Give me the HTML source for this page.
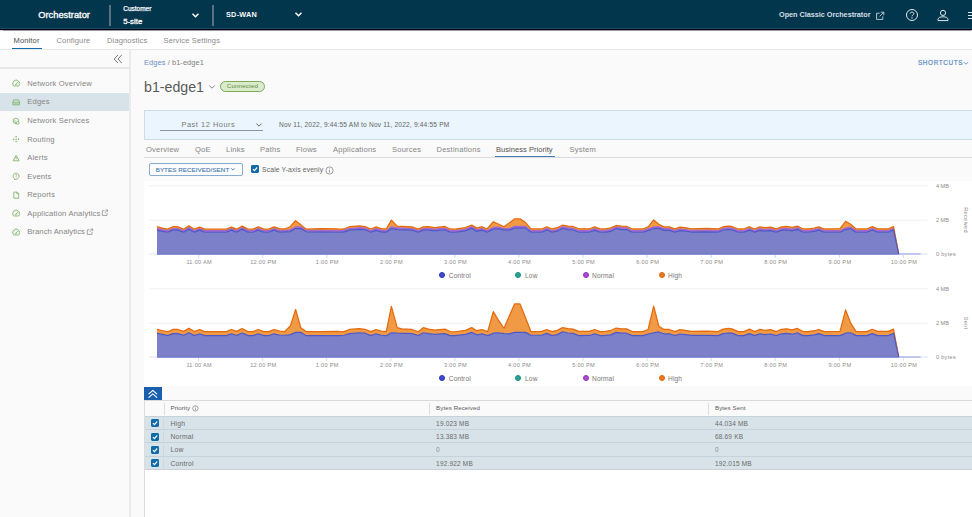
<!DOCTYPE html>
<html>
<head>
<meta charset="utf-8">
<title>Orchestrator</title>
<style>
*{box-sizing:border-box;margin:0;padding:0}
html,body{width:972px;height:517px;overflow:hidden;background:#fafafa;font-family:"Liberation Sans",sans-serif;color:#565656}
.abs{position:absolute}
.t{position:absolute;white-space:nowrap;line-height:1}
#hdr{position:absolute;left:0;top:0;width:972px;height:30px;background:#02364d;border-bottom:1.15px solid #05071f;box-shadow:0 .5px .9px rgba(0,0,0,.4),inset 0 -1.1px 0 #1a465a;z-index:5}
#hdr .t{color:#fafafa}
.vsep{position:absolute;top:5px;width:1.2px;height:20.6px;background:#587080}
#subnav{z-index:3;position:absolute;left:0;top:30px;width:972px;height:19.8px;background:#fff;border-bottom:1.4px solid #e8e8e8}
#side{position:absolute;left:0;top:49px;width:131px;height:468px;background:transparent;border-right:2px solid #ebebeb}
#side .it{position:absolute;left:27.2px;font-size:7.6px;color:#858585;letter-spacing:.2px;white-space:nowrap;line-height:1}
#side svg{position:absolute}

#main .t{color:#666}
#timebar{position:absolute;left:144px;top:110px;width:830px;height:30px;background:#eaf5fd;border:1px solid #cddde8}
.tab{position:absolute;top:145.5px;font-size:7.6px;color:#858585;letter-spacing:.2px;white-space:nowrap;line-height:1}
.chartbg{position:absolute;left:144px;width:828px;background:#fff}
.xl{position:absolute;font-size:5.6px;color:#8c8c8c;letter-spacing:.3px;white-space:nowrap;line-height:1;transform:translateX(-50%)}
.yl{position:absolute;left:935.9px;font-size:5.6px;letter-spacing:.22px;color:#8c8c8c;white-space:nowrap;line-height:1}
.lg{position:absolute;font-size:6.6px;color:#777;white-space:nowrap;line-height:1;letter-spacing:.1px}
.dot{position:absolute;width:6px;height:6px;border-radius:50%}
.row{position:absolute;left:145px;width:827px;height:13.3px;background:#d8e3e9;border-top:1px solid #c9d4db}
.cell{position:absolute;font-size:6.5px;color:#666;white-space:nowrap;line-height:1;letter-spacing:.18px}
.cb{position:absolute;width:8.2px;height:8px;background:#0f6ba8;border-radius:1.4px}
</style>
</head>
<body>
<!-- HEADER -->
<div id="hdr">
  <div class="t" style="left:38.3px;top:11px;font-size:9.3px;-webkit-text-stroke:.35px #fafafa">Orchestrator</div>
  <div class="vsep" style="left:109.4px"></div>
  <div class="t" style="left:123.2px;top:6.3px;font-size:6.5px;-webkit-text-stroke:.25px #fafafa">Customer</div>
  <div class="t" style="left:123.2px;top:17.5px;font-size:7.8px;-webkit-text-stroke:.3px #fafafa">5-site</div>
  <svg class="abs" style="left:191px;top:11.5px" width="9" height="7" viewBox="0 0 9 7"><path d="M1.5 1.7 L4.5 4.7 L7.5 1.7" fill="none" stroke="#fff" stroke-width="1.5"/></svg>
  <div class="vsep" style="left:212.4px"></div>
  <div class="t" style="left:226px;top:11.4px;font-size:7.3px;font-weight:bold;letter-spacing:.25px">SD-WAN</div>
  <svg class="abs" style="left:294px;top:11px" width="9" height="7" viewBox="0 0 9 7"><path d="M1.5 1.7 L4.5 4.7 L7.5 1.7" fill="none" stroke="#fff" stroke-width="1.5"/></svg>
  <div class="t" style="left:779px;top:11.1px;font-size:7.3px;font-weight:bold;letter-spacing:-.04px;color:#d4dde3">Open Classic Orchestrator</div>
  <svg class="abs" style="left:875px;top:10.5px" width="10" height="10" viewBox="0 0 10 10"><path d="M4.6 2.2 H1.6 V8.4 H7.8 V5.4" fill="none" stroke="#c9d4db" stroke-width=".9"/><path d="M5.8 1.2 H8.8 V4.2 M8.7 1.3 L4.6 5.4" fill="none" stroke="#c9d4db" stroke-width=".9"/></svg>
  <svg class="abs" style="left:905px;top:8.2px" width="14" height="14" viewBox="0 0 14 14"><circle cx="7" cy="7" r="5.5" fill="none" stroke="#dfe6ea" stroke-width="1"/><path d="M5.2 5.6 C5.2 3.6 8.8 3.6 8.8 5.6 C8.8 6.9 7 6.9 7 8.4" fill="none" stroke="#dfe6ea" stroke-width="1"/><circle cx="7" cy="10" r=".65" fill="#dfe6ea"/></svg>
  <svg class="abs" style="left:936px;top:8px" width="14" height="14" viewBox="0 0 14 14"><circle cx="7" cy="4.9" r="2.6" fill="none" stroke="#dfe6ea" stroke-width="1"/><path d="M2 12.6 V11.6 C2 9.6 4.2 8.8 7 8.8 C9.8 8.8 12 9.6 12 11.6 V12.6 Z" fill="none" stroke="#dfe6ea" stroke-width="1" stroke-linejoin="round"/></svg>
  <div class="abs" style="left:967.5px;top:12.3px;width:5px;height:1.1px;background:#dfe6ea"></div>
  <div class="abs" style="left:967.5px;top:15px;width:5px;height:1.1px;background:#dfe6ea"></div>
  <div class="abs" style="left:967.5px;top:17.7px;width:5px;height:1.1px;background:#dfe6ea"></div>
</div>
<!-- SUBNAV -->
<div id="subnav">
  <div class="t" style="left:13.5px;top:6.5px;font-size:7.5px;color:#4d4d4d;letter-spacing:.15px">Monitor</div>
  <div class="abs" style="left:12px;top:17.5px;width:29.7px;height:1.5px;background:#0f6ca8"></div>
  <div class="t" style="left:56.5px;top:6.5px;font-size:7.5px;color:#8a8a8a;letter-spacing:.15px">Configure</div>
  <div class="t" style="left:107px;top:6.5px;font-size:7.5px;color:#8a8a8a;letter-spacing:.15px">Diagnostics</div>
  <div class="t" style="left:163.5px;top:6.5px;font-size:7.5px;color:#8a8a8a;letter-spacing:.15px">Service Settings</div>
</div>
<!-- SIDEBAR -->
<div id="side">
<div class="abs" style="left:0;top:18.1px;width:129px;height:1.6px;background:#e7e7e7"></div>
<svg style="left:113.3px;top:4.6px" width="10" height="10" viewBox="0 0 10 10"><path d="M4.9 1 L1.2 5 L4.9 9 M8.7 1 L5 5 L8.7 9" fill="none" stroke="#6e6e6e" stroke-width=".95"/></svg>
<div class="abs" style="left:0;top:44px;width:129px;height:17.8px;background:#d8e3e9"></div>
<svg style="left:12px;top:30.45px" width="8.3" height="8.3" viewBox="0 0 10 10"><path d="M1.9 8.4 A4.2 4.2 0 1 1 8.1 8.4 Z" fill="none" stroke="#74ae5a" stroke-width=".95" stroke-linejoin="round"/><path d="M4.7 6.5 L6.9 4" stroke="#74ae5a" stroke-width="1" stroke-linecap="round"/><circle cx="4.8" cy="6.4" r=".8" fill="#74ae5a"/><path d="M5 2.2 V3 M2.4 3.4 L2.9 3.9 M1.7 5.6 H2.4 M8.3 5.6 H7.6" stroke="#74ae5a" stroke-width=".5"/></svg>
<div class="it" style="top:30.90px">Network Overview</div>
<svg style="left:12px;top:49.00px" width="8.3" height="8.3" viewBox="0 0 10 10"><path d="M1 5.1 L2.1 2.3 H7.9 L9 5.1 V8.2 H1 Z" fill="none" stroke="#74ae5a" stroke-width=".95" stroke-linejoin="round"/><path d="M1 5.1 H9" stroke="#74ae5a" stroke-width=".85"/><path d="M2.2 6.8 H7.8" stroke="#74ae5a" stroke-width=".85" stroke-dasharray="1 .5"/></svg>
<div class="it" style="top:49.45px">Edges</div>
<svg style="left:12px;top:67.55px" width="8.3" height="8.3" viewBox="0 0 10 10"><circle cx="4.7" cy="4.7" r="3.3" fill="none" stroke="#74ae5a" stroke-width=".95"/><path d="M2.6 3.2 Q4 4 3.6 5.4 Q4.6 6 4.4 7.6" fill="none" stroke="#74ae5a" stroke-width=".85"/><circle cx="6.9" cy="7" r="1.7" fill="#fafafa" stroke="#74ae5a" stroke-width=".95"/></svg>
<div class="it" style="top:68.00px">Network Services</div>
<svg style="left:12px;top:86.10px" width="8.3" height="8.3" viewBox="0 0 10 10"><circle cx="5" cy="5" r=".9" fill="#74ae5a"/><path d="M5 .9 L6.4 2.6 H3.6 Z M5 9.1 L6.4 7.4 H3.6 Z M.9 5 L2.6 3.6 V6.4 Z M9.1 5 L7.4 3.6 V6.4 Z" fill="#74ae5a"/></svg>
<div class="it" style="top:86.55px">Routing</div>
<svg style="left:12px;top:104.65px" width="8.3" height="8.3" viewBox="0 0 10 10"><path d="M5 1.6 L8.6 8.2 H1.4 Z" fill="none" stroke="#74ae5a" stroke-width=".95" stroke-linejoin="round"/><path d="M5 3.9 V6" stroke="#74ae5a" stroke-width=".95"/><circle cx="5" cy="7" r=".45" fill="#74ae5a"/></svg>
<div class="it" style="top:105.10px">Alerts</div>
<svg style="left:12px;top:123.20px" width="8.3" height="8.3" viewBox="0 0 10 10"><path d="M3.2 8.2 A3.6 3.6 0 1 1 5.4 8.6 L3 9.2 Z" fill="none" stroke="#74ae5a" stroke-width=".95" stroke-linejoin="round"/><path d="M5 2.9 V5.5" stroke="#74ae5a" stroke-width=".95"/><circle cx="5" cy="6.7" r=".45" fill="#74ae5a"/></svg>
<div class="it" style="top:123.65px">Events</div>
<svg style="left:12px;top:141.75px" width="8.3" height="8.3" viewBox="0 0 10 10"><path d="M2.2 1.3 H6 L8 3.3 V8.7 H2.2 Z" fill="none" stroke="#74ae5a" stroke-width=".95" stroke-linejoin="round"/><path d="M5.8 1.5 V3.5 H7.8" fill="none" stroke="#74ae5a" stroke-width=".85"/></svg>
<div class="it" style="top:142.20px">Reports</div>
<svg style="left:12px;top:160.30px" width="8.3" height="8.3" viewBox="0 0 10 10"><path d="M1.9 8.4 A4.2 4.2 0 1 1 8.1 8.4 Z" fill="none" stroke="#74ae5a" stroke-width=".95" stroke-linejoin="round"/><path d="M4.7 6.5 L6.9 4" stroke="#74ae5a" stroke-width="1" stroke-linecap="round"/><circle cx="4.8" cy="6.4" r=".8" fill="#74ae5a"/><path d="M5 2.2 V3 M2.4 3.4 L2.9 3.9 M1.7 5.6 H2.4 M8.3 5.6 H7.6" stroke="#74ae5a" stroke-width=".5"/></svg>
<div class="it" style="top:160.75px">Application Analytics</div>
<svg style="left:100.7px;top:160.15px" width="7.5" height="7.5" viewBox="0 0 7 7"><path d="M3.4 1.6 H1.2 V6 H5.6 V3.8" fill="none" stroke="#808080" stroke-width=".65"/><path d="M4.2 .9 H6.3 V3 M6.2 1 L3.4 3.8" fill="none" stroke="#808080" stroke-width=".65"/></svg>
<svg style="left:12px;top:178.85px" width="8.3" height="8.3" viewBox="0 0 10 10"><path d="M1.9 8.4 A4.2 4.2 0 1 1 8.1 8.4 Z" fill="none" stroke="#74ae5a" stroke-width=".95" stroke-linejoin="round"/><path d="M4.7 6.5 L6.9 4" stroke="#74ae5a" stroke-width="1" stroke-linecap="round"/><circle cx="4.8" cy="6.4" r=".8" fill="#74ae5a"/><path d="M5 2.2 V3 M2.4 3.4 L2.9 3.9 M1.7 5.6 H2.4 M8.3 5.6 H7.6" stroke="#74ae5a" stroke-width=".5"/></svg>
<div class="it" style="top:179.30px;letter-spacing:.1px">Branch Analytics</div>
<svg style="left:86.4px;top:178.70px" width="7.5" height="7.5" viewBox="0 0 7 7"><path d="M3.4 1.6 H1.2 V6 H5.6 V3.8" fill="none" stroke="#808080" stroke-width=".65"/><path d="M4.2 .9 H6.3 V3 M6.2 1 L3.4 3.8" fill="none" stroke="#808080" stroke-width=".65"/></svg>
</div>
<!-- MAIN -->
<div id="main">
  <div class="t" style="left:144px;top:58.5px;font-size:7.4px;letter-spacing:.1px"><span style="color:#6a8fc4">Edges</span> <span style="color:#808080">/ b1-edge1</span></div>
  <div class="t" style="left:144px;top:79.6px;font-size:14.2px;color:#5a5a5a;letter-spacing:0">b1-edge1</div>
  <svg class="abs" style="left:207.9px;top:83.9px" width="8" height="6" viewBox="0 0 8 6"><path d="M1.3 1.5 L4 4.2 L6.7 1.5" fill="none" stroke="#7a7a7a" stroke-width=".9"/></svg>
  <div class="abs" style="left:220px;top:81.2px;width:45px;height:11px;border:1px solid #7dab5c;background:#d9ebcb;border-radius:5.5px"></div>
  <div class="t" style="left:226.8px;top:83.4px;font-size:6.2px;color:#5e8c42;letter-spacing:.15px">Connected</div>
  <div class="t" style="left:918px;top:59.5px;font-size:6.4px;color:#5b8cbd;letter-spacing:.6px;-webkit-text-stroke:.2px #5b8cbd">SHORTCUTS</div>
  <svg class="abs" style="left:963px;top:60.5px" width="6" height="5" viewBox="0 0 6 5"><path d="M1 1.2 L3 3.2 L5 1.2" fill="none" stroke="#5b8cb8" stroke-width=".9"/></svg>

  <div id="timebar"></div>
  <div class="t" style="left:181.5px;top:120.5px;font-size:7.4px;color:#787878;letter-spacing:.54px">Past 12 Hours</div>
  <div class="abs" style="left:160px;top:130px;width:103px;height:1px;background:#8c959b"></div>
  <svg class="abs" style="left:255px;top:122.4px" width="8" height="6" viewBox="0 0 8 6"><path d="M1.4 1.6 L4 4.2 L6.6 1.6" fill="none" stroke="#666" stroke-width="1"/></svg>
  <div class="t" style="left:279px;top:122.2px;font-size:6.6px;color:#666;letter-spacing:.18px">Nov 11, 2022, 9:44:55 AM to Nov 11, 2022, 9:44:55 PM</div>

  <div class="abs" style="left:144px;top:157.3px;width:828px;height:1px;background:#dcdcdc"></div>
  <div class="tab" style="left:146px">Overview</div>
  <div class="tab" style="left:195px">QoE</div>
  <div class="tab" style="left:226px">Links</div>
  <div class="tab" style="left:260px">Paths</div>
  <div class="tab" style="left:296px">Flows</div>
  <div class="tab" style="left:333px">Applications</div>
  <div class="tab" style="left:392px">Sources</div>
  <div class="tab" style="left:436.5px">Destinations</div>
  <div class="tab" style="left:496px;color:#555;letter-spacing:0">Business Priority</div>
  <div class="abs" style="left:494.5px;top:155.6px;width:60px;height:1.6px;background:#3d7fb8"></div>
  <div class="tab" style="left:569.5px">System</div>

  <div class="abs" style="left:149px;top:163px;width:93.5px;height:13px;border:1px solid #89abd0;border-radius:2px;background:#fdfdfd"></div>
  <div class="t" style="left:155.7px;top:166.6px;font-size:6.2px;color:#4a7fb5;letter-spacing:.09px;-webkit-text-stroke:.15px #4a7fb5">BYTES RECEIVED/SENT</div>
  <svg class="abs" style="left:230.3px;top:167.3px" width="6" height="5" viewBox="0 0 6 5"><path d="M1.2 1.3 L3 3.1 L4.8 1.3" fill="none" stroke="#4a7fb5" stroke-width=".9"/></svg>
  <div class="cb" style="left:250.6px;top:165.4px"></div>
  <svg class="abs" style="left:250.6px;top:165.4px" width="8" height="8" viewBox="0 0 8 8"><path d="M1.9 4.2 L3.4 5.6 L6.2 2.5" fill="none" stroke="#fff" stroke-width="1.15"/></svg>
  <div class="t" style="left:262px;top:167.1px;font-size:6.8px;color:#666;letter-spacing:.14px">Scale Y-axis evenly</div>
  <svg class="abs" style="left:324.5px;top:165.6px" width="9" height="9" viewBox="0 0 9 9"><circle cx="4.5" cy="4.5" r="3.6" fill="none" stroke="#777" stroke-width=".7"/><rect x="4.15" y="3.9" width=".7" height="2.7" fill="#777"/><rect x="4.15" y="2.4" width=".7" height=".8" fill="#777"/></svg>

    <div class="chartbg" style="top:181px;height:205.4px"></div>
  <svg class="abs" style="left:0;top:0" width="972" height="517" viewBox="0 0 972 517">
<rect x="149" y="185.21" width="778.7" height="1.1" fill="#f2f2f2"/>
<rect x="149" y="219.78" width="778.7" height="1.1" fill="#f2f2f2"/>
<rect x="149" y="253.51" width="778.7" height="1" fill="#dde2f1"/>
<rect x="198.1" y="254.51" width="1" height="3.6" fill="#d5daee"/>
<rect x="262.2" y="254.51" width="1" height="3.6" fill="#d5daee"/>
<rect x="326.2" y="254.51" width="1" height="3.6" fill="#d5daee"/>
<rect x="390.3" y="254.51" width="1" height="3.6" fill="#d5daee"/>
<rect x="454.4" y="254.51" width="1" height="3.6" fill="#d5daee"/>
<rect x="518.4" y="254.51" width="1" height="3.6" fill="#d5daee"/>
<rect x="582.5" y="254.51" width="1" height="3.6" fill="#d5daee"/>
<rect x="646.6" y="254.51" width="1" height="3.6" fill="#d5daee"/>
<rect x="710.7" y="254.51" width="1" height="3.6" fill="#d5daee"/>
<rect x="774.7" y="254.51" width="1" height="3.6" fill="#d5daee"/>
<rect x="838.8" y="254.51" width="1" height="3.6" fill="#d5daee"/>
<rect x="902.9" y="254.51" width="1" height="3.6" fill="#d5daee"/>
<path d="M157.0 226.70 L162.5 228.14 L167.7 229.17 L172.8 226.70 L178.0 226.70 L183.7 229.17 L188.9 225.67 L194.4 229.17 L199.6 227.11 L204.7 229.17 L226.3 229.17 L231.4 227.11 L236.6 229.17 L242.1 226.08 L247.9 229.17 L253.1 229.17 L258.2 226.90 L263.8 229.17 L268.9 229.17 L274.0 226.90 L279.8 228.96 L284.9 228.96 L290.1 226.70 L295.6 220.73 L300.8 224.64 L306.1 229.17 L321.0 228.55 L337.4 228.96 L340.0 229.17 L344.1 228.96 L349.3 226.70 L359.5 225.87 L365.1 226.70 L370.9 228.96 L376.0 226.90 L381.2 228.55 L386.3 228.96 L391.4 220.11 L397.2 226.08 L412.0 226.90 L418.2 229.17 L423.3 226.90 L428.5 226.70 L434.7 227.52 L444.9 226.49 L450.1 228.96 L455.2 229.17 L465.5 227.52 L471.7 225.05 L476.8 228.14 L482.0 226.70 L487.1 228.96 L493.3 221.76 L498.4 224.02 L504.0 226.70 L509.3 222.99 L514.5 218.88 L520.0 218.88 L525.6 222.58 L530.9 228.96 L535.5 228.96 L541.8 228.96 L546.7 226.70 L552.0 228.96 L557.2 227.73 L562.7 225.05 L567.9 226.08 L573.0 226.49 L578.8 228.75 L589.5 228.75 L594.6 226.90 L600.2 228.96 L605.5 228.75 L610.5 227.93 L616.2 225.46 L621.4 226.08 L626.5 226.28 L632.3 228.96 L643.0 228.96 L648.1 226.90 L653.7 219.91 L658.8 224.23 L664.0 226.90 L669.3 226.90 L674.9 228.96 L680.0 227.11 L685.2 227.73 L691.3 228.75 L706.8 228.34 L718.1 228.96 L723.2 226.70 L728.4 226.08 L731.9 226.49 L738.2 228.96 L743.9 228.96 L749.5 226.70 L754.6 228.96 L759.8 226.90 L764.9 227.73 L770.7 227.11 L776.2 228.96 L781.4 226.90 L786.5 226.49 L792.1 227.31 L797.4 226.08 L803.0 228.96 L808.1 228.96 L814.3 228.14 L818.8 226.90 L824.2 228.96 L840.0 228.75 L845.6 221.35 L850.7 224.23 L856.1 228.96 L866.8 228.96 L872.3 226.70 L877.7 228.75 L888.4 228.75 L893.5 226.49 L898.7 253.86 L898.7 254.01 L893.5 229.77 L888.4 232.24 L877.7 232.24 L872.3 229.98 L866.8 232.24 L856.1 232.24 L850.7 228.74 L845.6 229.57 L840.0 232.24 L824.2 232.24 L818.8 230.18 L814.3 231.42 L808.1 232.24 L803.0 232.24 L797.4 229.36 L792.1 230.80 L786.5 229.98 L781.4 230.39 L776.2 232.24 L770.7 230.59 L764.9 231.21 L759.8 230.39 L754.6 232.24 L749.5 230.18 L743.9 232.24 L738.2 232.24 L731.9 229.77 L728.4 229.57 L723.2 229.98 L718.1 232.24 L706.8 231.83 L691.3 232.03 L685.2 231.21 L680.0 230.59 L674.9 232.24 L669.3 230.39 L664.0 230.39 L658.8 228.33 L653.7 228.54 L648.1 230.59 L643.0 232.24 L632.3 232.24 L626.5 229.57 L621.4 229.57 L616.2 228.54 L610.5 231.42 L605.5 232.03 L600.2 232.24 L594.6 230.39 L589.5 232.03 L578.8 232.24 L573.0 229.98 L567.9 229.57 L562.7 228.33 L557.2 231.21 L552.0 232.24 L546.7 229.98 L541.8 232.24 L535.5 232.24 L530.9 232.24 L525.6 228.13 L514.5 228.13 L509.3 230.18 L504.0 230.18 L498.4 228.74 L493.3 229.15 L487.1 232.24 L482.0 230.18 L476.8 231.42 L471.7 228.33 L465.5 230.80 L455.2 232.24 L450.1 232.24 L444.9 229.77 L434.7 230.80 L428.5 230.18 L423.3 230.18 L418.2 232.24 L412.0 230.18 L397.2 229.57 L391.4 228.54 L386.3 232.24 L381.2 231.83 L376.0 230.39 L370.9 232.24 L365.1 229.77 L359.5 229.36 L349.3 230.18 L344.1 231.83 L340.0 232.24 L337.4 232.24 L306.1 231.83 L300.8 228.54 L295.6 228.54 L290.1 231.62 L279.8 232.24 L274.0 230.18 L268.9 232.24 L263.8 232.24 L258.2 230.18 L253.1 232.24 L247.9 232.24 L242.1 229.15 L236.6 232.24 L231.4 230.18 L226.3 232.24 L204.7 232.24 L199.6 230.18 L194.4 232.24 L188.9 229.15 L183.7 232.24 L178.0 230.18 L172.8 230.18 L167.7 232.24 L162.5 231.42 L157.0 230.18 Z" fill="#f09a45"/>
<path d="M157.0 227.88 L162.5 229.12 L167.7 229.94 L172.8 227.88 L178.0 227.88 L183.7 229.94 L188.9 226.85 L194.4 229.94 L199.6 227.88 L204.7 229.94 L226.3 229.94 L231.4 227.88 L236.6 229.94 L242.1 226.85 L247.9 229.94 L253.1 229.94 L258.2 227.88 L263.8 229.94 L268.9 229.94 L274.0 227.88 L279.8 229.94 L290.1 229.32 L295.6 226.24 L300.8 226.24 L306.1 229.53 L337.4 229.94 L340.0 229.94 L344.1 229.53 L349.3 227.88 L359.5 227.06 L365.1 227.47 L370.9 229.94 L376.0 228.09 L381.2 229.53 L386.3 229.94 L391.4 226.24 L397.2 227.27 L412.0 227.88 L418.2 229.94 L423.3 227.88 L428.5 227.88 L434.7 228.50 L444.9 227.47 L450.1 229.94 L455.2 229.94 L465.5 228.50 L471.7 226.03 L476.8 229.12 L482.0 227.88 L487.1 229.94 L493.3 226.85 L498.4 226.44 L504.0 227.88 L509.3 227.88 L514.5 225.83 L525.6 225.83 L530.9 229.94 L535.5 229.94 L541.8 229.94 L546.7 227.68 L552.0 229.94 L557.2 228.91 L562.7 226.03 L567.9 227.27 L573.0 227.68 L578.8 229.94 L589.5 229.73 L594.6 228.09 L600.2 229.94 L605.5 229.73 L610.5 229.12 L616.2 226.24 L621.4 227.27 L626.5 227.27 L632.3 229.94 L643.0 229.94 L648.1 228.29 L653.7 226.24 L658.8 226.03 L664.0 228.09 L669.3 228.09 L674.9 229.94 L680.0 228.29 L685.2 228.91 L691.3 229.73 L706.8 229.53 L718.1 229.94 L723.2 227.68 L728.4 227.27 L731.9 227.47 L738.2 229.94 L743.9 229.94 L749.5 227.88 L754.6 229.94 L759.8 228.09 L764.9 228.91 L770.7 228.29 L776.2 229.94 L781.4 228.09 L786.5 227.68 L792.1 228.50 L797.4 227.06 L803.0 229.94 L808.1 229.94 L814.3 229.12 L818.8 227.88 L824.2 229.94 L840.0 229.94 L845.6 227.27 L850.7 226.44 L856.1 229.94 L866.8 229.94 L872.3 227.68 L877.7 229.94 L888.4 229.94 L893.5 227.47 L898.7 254.01 L898.7 254.01 L893.5 229.77 L888.4 232.24 L877.7 232.24 L872.3 229.98 L866.8 232.24 L856.1 232.24 L850.7 228.74 L845.6 229.57 L840.0 232.24 L824.2 232.24 L818.8 230.18 L814.3 231.42 L808.1 232.24 L803.0 232.24 L797.4 229.36 L792.1 230.80 L786.5 229.98 L781.4 230.39 L776.2 232.24 L770.7 230.59 L764.9 231.21 L759.8 230.39 L754.6 232.24 L749.5 230.18 L743.9 232.24 L738.2 232.24 L731.9 229.77 L728.4 229.57 L723.2 229.98 L718.1 232.24 L706.8 231.83 L691.3 232.03 L685.2 231.21 L680.0 230.59 L674.9 232.24 L669.3 230.39 L664.0 230.39 L658.8 228.33 L653.7 228.54 L648.1 230.59 L643.0 232.24 L632.3 232.24 L626.5 229.57 L621.4 229.57 L616.2 228.54 L610.5 231.42 L605.5 232.03 L600.2 232.24 L594.6 230.39 L589.5 232.03 L578.8 232.24 L573.0 229.98 L567.9 229.57 L562.7 228.33 L557.2 231.21 L552.0 232.24 L546.7 229.98 L541.8 232.24 L535.5 232.24 L530.9 232.24 L525.6 228.13 L514.5 228.13 L509.3 230.18 L504.0 230.18 L498.4 228.74 L493.3 229.15 L487.1 232.24 L482.0 230.18 L476.8 231.42 L471.7 228.33 L465.5 230.80 L455.2 232.24 L450.1 232.24 L444.9 229.77 L434.7 230.80 L428.5 230.18 L423.3 230.18 L418.2 232.24 L412.0 230.18 L397.2 229.57 L391.4 228.54 L386.3 232.24 L381.2 231.83 L376.0 230.39 L370.9 232.24 L365.1 229.77 L359.5 229.36 L349.3 230.18 L344.1 231.83 L340.0 232.24 L337.4 232.24 L306.1 231.83 L300.8 228.54 L295.6 228.54 L290.1 231.62 L279.8 232.24 L274.0 230.18 L268.9 232.24 L263.8 232.24 L258.2 230.18 L253.1 232.24 L247.9 232.24 L242.1 229.15 L236.6 232.24 L231.4 230.18 L226.3 232.24 L204.7 232.24 L199.6 230.18 L194.4 232.24 L188.9 229.15 L183.7 232.24 L178.0 230.18 L172.8 230.18 L167.7 232.24 L162.5 231.42 L157.0 230.18 Z" fill="#a06ad0"/>
<path d="M157.0 230.18 L162.5 231.42000000000002 L167.7 232.24 L172.8 230.18 L178.0 230.18 L183.7 232.24 L188.9 229.15 L194.4 232.24 L199.6 230.18 L204.7 232.24 L226.3 232.24 L231.4 230.18 L236.6 232.24 L242.1 229.15 L247.9 232.24 L253.1 232.24 L258.2 230.18 L263.8 232.24 L268.9 232.24 L274.0 230.18 L279.8 232.24 L290.1 231.62 L295.6 228.54000000000002 L300.8 228.54000000000002 L306.1 231.83 L337.4 232.24 L340.0 232.24 L344.1 231.83 L349.3 230.18 L359.5 229.36 L365.1 229.77 L370.9 232.24 L376.0 230.39000000000001 L381.2 231.83 L386.3 232.24 L391.4 228.54000000000002 L397.2 229.57000000000002 L412.0 230.18 L418.2 232.24 L423.3 230.18 L428.5 230.18 L434.7 230.8 L444.9 229.77 L450.1 232.24 L455.2 232.24 L465.5 230.8 L471.7 228.33 L476.8 231.42000000000002 L482.0 230.18 L487.1 232.24 L493.3 229.15 L498.4 228.74 L504.0 230.18 L509.3 230.18 L514.5 228.13000000000002 L525.6 228.13000000000002 L530.9 232.24 L535.5 232.24 L541.8 232.24 L546.7 229.98000000000002 L552.0 232.24 L557.2 231.21 L562.7 228.33 L567.9 229.57000000000002 L573.0 229.98000000000002 L578.8 232.24 L589.5 232.03 L594.6 230.39000000000001 L600.2 232.24 L605.5 232.03 L610.5 231.42000000000002 L616.2 228.54000000000002 L621.4 229.57000000000002 L626.5 229.57000000000002 L632.3 232.24 L643.0 232.24 L648.1 230.59 L653.7 228.54000000000002 L658.8 228.33 L664.0 230.39000000000001 L669.3 230.39000000000001 L674.9 232.24 L680.0 230.59 L685.2 231.21 L691.3 232.03 L706.8 231.83 L718.1 232.24 L723.2 229.98000000000002 L728.4 229.57000000000002 L731.9 229.77 L738.2 232.24 L743.9 232.24 L749.5 230.18 L754.6 232.24 L759.8 230.39000000000001 L764.9 231.21 L770.7 230.59 L776.2 232.24 L781.4 230.39000000000001 L786.5 229.98000000000002 L792.1 230.8 L797.4 229.36 L803.0 232.24 L808.1 232.24 L814.3 231.42000000000002 L818.8 230.18 L824.2 232.24 L840.0 232.24 L845.6 229.57000000000002 L850.7 228.74 L856.1 232.24 L866.8 232.24 L872.3 229.98000000000002 L877.7 232.24 L888.4 232.24 L893.5 229.77 L898.7 254.0067901234568 L898.7 254.5067901234568 L157.0 254.5067901234568 Z" fill="#7b80c9"/>
<rect x="898.6" y="253.11" width="22" height="1.8" fill="#bcc3e8"/>
<rect x="157" y="253.56" width="741.6" height="1" fill="#6c75ca"/>
<path d="M157.0 226.70000000000002 L162.5 228.14000000000001 L167.7 229.17000000000002 L172.8 226.70000000000002 L178.0 226.70000000000002 L183.7 229.17000000000002 L188.9 225.67000000000002 L194.4 229.17000000000002 L199.6 227.11 L204.7 229.17000000000002 L226.3 229.17000000000002 L231.4 227.11 L236.6 229.17000000000002 L242.1 226.08 L247.9 229.17000000000002 L253.1 229.17000000000002 L258.2 226.9 L263.8 229.17000000000002 L268.9 229.17000000000002 L274.0 226.9 L279.8 228.96 L284.9 228.96 L290.1 226.70000000000002 L295.6 220.73000000000002 L300.8 224.64000000000001 L306.1 229.17000000000002 L321.0 228.55 L337.4 228.96 L340.0 229.17000000000002 L344.1 228.96 L349.3 226.70000000000002 L359.5 225.87 L365.1 226.70000000000002 L370.9 228.96 L376.0 226.9 L381.2 228.55 L386.3 228.96 L391.4 220.11 L397.2 226.08 L412.0 226.9 L418.2 229.17000000000002 L423.3 226.9 L428.5 226.70000000000002 L434.7 227.52 L444.9 226.49 L450.1 228.96 L455.2 229.17000000000002 L465.5 227.52 L471.7 225.05 L476.8 228.14000000000001 L482.0 226.70000000000002 L487.1 228.96 L493.3 221.76000000000002 L498.4 224.02 L504.0 226.70000000000002 L509.3 222.99 L514.5 218.88 L520.0 218.88 L525.6 222.58 L530.9 228.96 L535.5 228.96 L541.8 228.96 L546.7 226.70000000000002 L552.0 228.96 L557.2 227.73000000000002 L562.7 225.05 L567.9 226.08 L573.0 226.49 L578.8 228.75 L589.5 228.75 L594.6 226.9 L600.2 228.96 L605.5 228.75 L610.5 227.93 L616.2 225.46 L621.4 226.08 L626.5 226.28 L632.3 228.96 L643.0 228.96 L648.1 226.9 L653.7 219.91 L658.8 224.23000000000002 L664.0 226.9 L669.3 226.9 L674.9 228.96 L680.0 227.11 L685.2 227.73000000000002 L691.3 228.75 L706.8 228.34 L718.1 228.96 L723.2 226.70000000000002 L728.4 226.08 L731.9 226.49 L738.2 228.96 L743.9 228.96 L749.5 226.70000000000002 L754.6 228.96 L759.8 226.9 L764.9 227.73000000000002 L770.7 227.11 L776.2 228.96 L781.4 226.9 L786.5 226.49 L792.1 227.31 L797.4 226.08 L803.0 228.96 L808.1 228.96 L814.3 228.14000000000001 L818.8 226.9 L824.2 228.96 L840.0 228.75 L845.6 221.35 L850.7 224.23000000000002 L856.1 228.96 L866.8 228.96 L872.3 226.70000000000002 L877.7 228.75 L888.4 228.75 L893.5 226.49 L898.7 253.86" fill="none" stroke="#e46a0c" stroke-width="1.25" stroke-linejoin="round"/>
<path d="M157.0 230.18 L162.5 231.42000000000002 L167.7 232.24 L172.8 230.18 L178.0 230.18 L183.7 232.24 L188.9 229.15 L194.4 232.24 L199.6 230.18 L204.7 232.24 L226.3 232.24 L231.4 230.18 L236.6 232.24 L242.1 229.15 L247.9 232.24 L253.1 232.24 L258.2 230.18 L263.8 232.24 L268.9 232.24 L274.0 230.18 L279.8 232.24 L290.1 231.62 L295.6 228.54000000000002 L300.8 228.54000000000002 L306.1 231.83 L337.4 232.24 L340.0 232.24 L344.1 231.83 L349.3 230.18 L359.5 229.36 L365.1 229.77 L370.9 232.24 L376.0 230.39000000000001 L381.2 231.83 L386.3 232.24 L391.4 228.54000000000002 L397.2 229.57000000000002 L412.0 230.18 L418.2 232.24 L423.3 230.18 L428.5 230.18 L434.7 230.8 L444.9 229.77 L450.1 232.24 L455.2 232.24 L465.5 230.8 L471.7 228.33 L476.8 231.42000000000002 L482.0 230.18 L487.1 232.24 L493.3 229.15 L498.4 228.74 L504.0 230.18 L509.3 230.18 L514.5 228.13000000000002 L525.6 228.13000000000002 L530.9 232.24 L535.5 232.24 L541.8 232.24 L546.7 229.98000000000002 L552.0 232.24 L557.2 231.21 L562.7 228.33 L567.9 229.57000000000002 L573.0 229.98000000000002 L578.8 232.24 L589.5 232.03 L594.6 230.39000000000001 L600.2 232.24 L605.5 232.03 L610.5 231.42000000000002 L616.2 228.54000000000002 L621.4 229.57000000000002 L626.5 229.57000000000002 L632.3 232.24 L643.0 232.24 L648.1 230.59 L653.7 228.54000000000002 L658.8 228.33 L664.0 230.39000000000001 L669.3 230.39000000000001 L674.9 232.24 L680.0 230.59 L685.2 231.21 L691.3 232.03 L706.8 231.83 L718.1 232.24 L723.2 229.98000000000002 L728.4 229.57000000000002 L731.9 229.77 L738.2 232.24 L743.9 232.24 L749.5 230.18 L754.6 232.24 L759.8 230.39000000000001 L764.9 231.21 L770.7 230.59 L776.2 232.24 L781.4 230.39000000000001 L786.5 229.98000000000002 L792.1 230.8 L797.4 229.36 L803.0 232.24 L808.1 232.24 L814.3 231.42000000000002 L818.8 230.18 L824.2 232.24 L840.0 232.24 L845.6 229.57000000000002 L850.7 228.74 L856.1 232.24 L866.8 232.24 L872.3 229.98000000000002 L877.7 232.24 L888.4 232.24 L893.5 229.77 L898.7 254.0067901234568" fill="none" stroke="#4d58c6" stroke-width="1.2" stroke-linejoin="round"/>
</svg>
<div class="yl" style="top:184.2px;letter-spacing:.03px">4 MB</div>
<div class="yl" style="top:217.7px;letter-spacing:.03px">2 MB</div>
<div class="yl" style="top:252.4px;letter-spacing:.3px">0 bytes</div>
<div class="t" style="left:964.5px;top:219.9px;font-size:5.7px;letter-spacing:.25px;color:#8c8c8c;transform:translate(-50%,-50%) rotate(90deg)">Received</div>
<div class="xl" style="left:199.2px;top:260.3px">11:00 AM</div>
<div class="xl" style="left:263.3px;top:260.3px">12:00 PM</div>
<div class="xl" style="left:327.3px;top:260.3px">1:00 PM</div>
<div class="xl" style="left:391.4px;top:260.3px">2:00 PM</div>
<div class="xl" style="left:455.5px;top:260.3px">3:00 PM</div>
<div class="xl" style="left:519.5px;top:260.3px">4:00 PM</div>
<div class="xl" style="left:583.6px;top:260.3px">5:00 PM</div>
<div class="xl" style="left:647.7px;top:260.3px">6:00 PM</div>
<div class="xl" style="left:711.8px;top:260.3px">7:00 PM</div>
<div class="xl" style="left:775.8px;top:260.3px">8:00 PM</div>
<div class="xl" style="left:839.9px;top:260.3px">9:00 PM</div>
<div class="xl" style="left:904.0px;top:260.3px">10:00 PM</div>
<div class="dot" style="left:439.0px;top:271.7px;background:#434cc6;border:1.4px solid #2a31c0"></div>
<div class="lg" style="left:448.8px;top:272.7px">Control</div>
<div class="dot" style="left:515.3px;top:271.7px;background:#2ea192;border:1.4px solid #14907f"></div>
<div class="lg" style="left:525.1px;top:272.7px">Low</div>
<div class="dot" style="left:582.5px;top:271.7px;background:#a64dd0;border:1.4px solid #9432c2"></div>
<div class="lg" style="left:592.1px;top:272.7px">Normal</div>
<div class="dot" style="left:658.5px;top:271.7px;background:#ea7a22;border:1.4px solid #e2630a"></div>
<div class="lg" style="left:668.1px;top:272.7px">High</div>
<svg class="abs" style="left:0;top:0" width="972" height="517" viewBox="0 0 972 517">
<rect x="149" y="288.21" width="778.7" height="1.1" fill="#f2f2f2"/>
<rect x="149" y="322.78" width="778.7" height="1.1" fill="#f2f2f2"/>
<rect x="149" y="356.51" width="778.7" height="1" fill="#dde2f1"/>
<rect x="198.1" y="357.51" width="1" height="3.6" fill="#d5daee"/>
<rect x="262.2" y="357.51" width="1" height="3.6" fill="#d5daee"/>
<rect x="326.2" y="357.51" width="1" height="3.6" fill="#d5daee"/>
<rect x="390.3" y="357.51" width="1" height="3.6" fill="#d5daee"/>
<rect x="454.4" y="357.51" width="1" height="3.6" fill="#d5daee"/>
<rect x="518.4" y="357.51" width="1" height="3.6" fill="#d5daee"/>
<rect x="582.5" y="357.51" width="1" height="3.6" fill="#d5daee"/>
<rect x="646.6" y="357.51" width="1" height="3.6" fill="#d5daee"/>
<rect x="710.7" y="357.51" width="1" height="3.6" fill="#d5daee"/>
<rect x="774.7" y="357.51" width="1" height="3.6" fill="#d5daee"/>
<rect x="838.8" y="357.51" width="1" height="3.6" fill="#d5daee"/>
<rect x="902.9" y="357.51" width="1" height="3.6" fill="#d5daee"/>
<path d="M157.0 329.28 L162.5 330.73 L167.7 331.75 L172.8 329.49 L178.0 329.49 L183.7 331.34 L188.9 328.26 L194.4 331.55 L199.6 329.49 L204.7 331.55 L226.3 331.55 L231.4 329.49 L236.6 331.34 L242.1 328.46 L247.9 331.55 L253.1 331.55 L258.2 329.49 L263.8 331.55 L268.9 331.55 L274.0 329.49 L279.8 331.14 L284.9 331.55 L290.5 325.58 L295.6 309.53 L300.8 327.64 L306.1 331.55 L321.0 331.55 L337.4 331.34 L340.0 331.55 L344.1 331.55 L349.3 329.49 L359.5 328.67 L365.1 329.28 L370.9 331.55 L376.0 329.70 L381.2 331.14 L386.3 331.55 L391.4 306.45 L397.2 327.64 L401.7 328.87 L412.0 329.49 L418.2 331.75 L423.3 327.64 L428.5 329.08 L434.7 330.11 L444.9 329.08 L450.1 331.55 L455.2 331.75 L465.5 330.31 L471.7 327.64 L476.8 330.73 L482.0 329.49 L487.7 331.55 L493.3 311.59 L498.4 320.03 L504.0 328.26 L509.3 315.91 L514.5 303.98 L520.0 303.98 L525.6 317.97 L530.9 331.55 L535.5 331.55 L541.8 331.34 L546.7 329.49 L552.0 331.55 L557.2 330.31 L562.7 327.64 L567.9 328.67 L573.0 329.08 L578.8 331.34 L589.5 331.34 L594.6 329.49 L600.2 331.55 L605.5 331.34 L610.5 330.52 L616.2 328.05 L621.4 328.87 L626.5 328.87 L632.3 331.55 L643.0 331.55 L648.1 329.49 L653.7 306.03 L658.8 326.20 L664.0 329.49 L669.3 329.49 L674.9 331.55 L680.0 329.70 L685.2 330.31 L691.3 331.34 L706.8 331.14 L718.1 331.55 L723.2 329.08 L728.4 328.46 L731.9 328.87 L738.2 331.55 L743.9 331.55 L749.5 329.08 L754.6 331.55 L759.8 329.49 L764.9 330.31 L770.7 329.70 L776.2 331.55 L781.4 329.28 L786.5 328.87 L792.1 329.90 L797.4 328.46 L803.0 331.55 L808.1 331.55 L814.3 330.73 L818.8 329.49 L824.2 331.55 L840.0 331.34 L845.6 309.94 L850.7 323.11 L856.1 331.55 L866.8 331.55 L872.3 329.28 L877.7 331.34 L888.4 331.34 L893.5 329.08 L898.7 356.86 L898.7 357.01 L893.5 333.18 L888.4 335.65 L877.7 335.65 L872.3 333.59 L866.8 335.65 L856.1 335.65 L850.7 332.77 L845.6 333.18 L840.0 335.65 L824.2 335.65 L818.8 333.59 L814.3 334.83 L808.1 335.65 L803.0 335.65 L797.4 332.77 L792.1 334.21 L786.5 333.39 L781.4 333.80 L776.2 335.65 L770.7 334.01 L764.9 334.62 L759.8 333.80 L754.6 335.65 L749.5 333.59 L743.9 335.65 L738.2 335.65 L731.9 333.18 L728.4 332.98 L723.2 333.59 L718.1 335.65 L706.8 335.24 L691.3 335.45 L685.2 334.62 L680.0 334.01 L674.9 335.65 L669.3 333.80 L664.0 333.80 L658.8 331.95 L653.7 332.77 L648.1 334.01 L643.0 335.65 L632.3 335.65 L626.5 333.18 L621.4 333.18 L616.2 332.36 L610.5 334.83 L605.5 335.45 L600.2 335.65 L594.6 333.80 L589.5 335.45 L578.8 335.65 L573.0 333.39 L567.9 332.98 L562.7 331.74 L557.2 334.62 L552.0 335.65 L546.7 333.39 L541.8 335.24 L535.5 335.24 L530.9 335.24 L525.6 332.36 L514.5 332.36 L509.3 333.80 L504.0 333.59 L498.4 332.77 L493.3 333.18 L487.7 335.65 L482.0 333.80 L476.8 334.83 L471.7 332.36 L465.5 334.42 L455.2 335.65 L450.1 335.65 L444.9 333.59 L434.7 334.42 L428.5 333.59 L423.3 332.77 L418.2 335.45 L412.0 333.59 L397.2 333.18 L391.4 332.77 L386.3 335.65 L381.2 335.24 L376.0 333.80 L370.9 335.65 L365.1 333.18 L359.5 332.77 L349.3 333.59 L344.1 335.24 L340.0 335.65 L337.4 335.65 L306.1 335.65 L300.8 332.36 L295.6 332.36 L290.5 334.62 L284.9 335.24 L279.8 335.24 L274.0 333.80 L268.9 335.65 L263.8 335.65 L258.2 333.80 L253.1 335.65 L247.9 335.65 L242.1 332.98 L236.6 335.45 L231.4 333.80 L226.3 335.65 L204.7 335.65 L199.6 333.80 L194.4 335.65 L188.9 332.77 L183.7 335.24 L178.0 333.59 L172.8 333.59 L167.7 335.65 L162.5 334.42 L157.0 333.39 Z" fill="#f09a45"/>
<path d="M157.0 333.39 L162.5 334.42 L167.7 335.65000000000003 L172.8 333.59000000000003 L178.0 333.59000000000003 L183.7 335.24 L188.9 332.77000000000004 L194.4 335.65000000000003 L199.6 333.8 L204.7 335.65000000000003 L226.3 335.65000000000003 L231.4 333.8 L236.6 335.45 L242.1 332.98 L247.9 335.65000000000003 L253.1 335.65000000000003 L258.2 333.8 L263.8 335.65000000000003 L268.9 335.65000000000003 L274.0 333.8 L279.8 335.24 L284.9 335.24 L290.5 334.62 L295.6 332.36 L300.8 332.36 L306.1 335.65000000000003 L337.4 335.65000000000003 L340.0 335.65000000000003 L344.1 335.24 L349.3 333.59000000000003 L359.5 332.77000000000004 L365.1 333.18 L370.9 335.65000000000003 L376.0 333.8 L381.2 335.24 L386.3 335.65000000000003 L391.4 332.77000000000004 L397.2 333.18 L412.0 333.59000000000003 L418.2 335.45 L423.3 332.77000000000004 L428.5 333.59000000000003 L434.7 334.42 L444.9 333.59000000000003 L450.1 335.65000000000003 L455.2 335.65000000000003 L465.5 334.42 L471.7 332.36 L476.8 334.83 L482.0 333.8 L487.7 335.65000000000003 L493.3 333.18 L498.4 332.77000000000004 L504.0 333.59000000000003 L509.3 333.8 L514.5 332.36 L525.6 332.36 L530.9 335.24 L535.5 335.24 L541.8 335.24 L546.7 333.39 L552.0 335.65000000000003 L557.2 334.62 L562.7 331.74 L567.9 332.98 L573.0 333.39 L578.8 335.65000000000003 L589.5 335.45 L594.6 333.8 L600.2 335.65000000000003 L605.5 335.45 L610.5 334.83 L616.2 332.36 L621.4 333.18 L626.5 333.18 L632.3 335.65000000000003 L643.0 335.65000000000003 L648.1 334.01 L653.7 332.77000000000004 L658.8 331.95 L664.0 333.8 L669.3 333.8 L674.9 335.65000000000003 L680.0 334.01 L685.2 334.62 L691.3 335.45 L706.8 335.24 L718.1 335.65000000000003 L723.2 333.59000000000003 L728.4 332.98 L731.9 333.18 L738.2 335.65000000000003 L743.9 335.65000000000003 L749.5 333.59000000000003 L754.6 335.65000000000003 L759.8 333.8 L764.9 334.62 L770.7 334.01 L776.2 335.65000000000003 L781.4 333.8 L786.5 333.39 L792.1 334.21000000000004 L797.4 332.77000000000004 L803.0 335.65000000000003 L808.1 335.65000000000003 L814.3 334.83 L818.8 333.59000000000003 L824.2 335.65000000000003 L840.0 335.65000000000003 L845.6 333.18 L850.7 332.77000000000004 L856.1 335.65000000000003 L866.8 335.65000000000003 L872.3 333.59000000000003 L877.7 335.65000000000003 L888.4 335.65000000000003 L893.5 333.18 L898.7 357.0067901234568 L898.7 357.5067901234568 L157.0 357.5067901234568 Z" fill="#7b80c9"/>
<rect x="898.6" y="356.11" width="22" height="1.8" fill="#bcc3e8"/>
<rect x="157" y="356.56" width="741.6" height="1" fill="#6c75ca"/>
<path d="M157.0 329.28 L162.5 330.72999999999996 L167.7 331.75 L172.8 329.48999999999995 L178.0 329.48999999999995 L183.7 331.34 L188.9 328.26 L194.4 331.54999999999995 L199.6 329.48999999999995 L204.7 331.54999999999995 L226.3 331.54999999999995 L231.4 329.48999999999995 L236.6 331.34 L242.1 328.46 L247.9 331.54999999999995 L253.1 331.54999999999995 L258.2 329.48999999999995 L263.8 331.54999999999995 L268.9 331.54999999999995 L274.0 329.48999999999995 L279.8 331.14 L284.9 331.54999999999995 L290.5 325.58 L295.6 309.53 L300.8 327.64 L306.1 331.54999999999995 L321.0 331.54999999999995 L337.4 331.34 L340.0 331.54999999999995 L344.1 331.54999999999995 L349.3 329.48999999999995 L359.5 328.66999999999996 L365.1 329.28 L370.9 331.54999999999995 L376.0 329.7 L381.2 331.14 L386.3 331.54999999999995 L391.4 306.45 L397.2 327.64 L401.7 328.87 L412.0 329.48999999999995 L418.2 331.75 L423.3 327.64 L428.5 329.08 L434.7 330.10999999999996 L444.9 329.08 L450.1 331.54999999999995 L455.2 331.75 L465.5 330.31 L471.7 327.64 L476.8 330.72999999999996 L482.0 329.48999999999995 L487.7 331.54999999999995 L493.3 311.59 L498.4 320.03 L504.0 328.26 L509.3 315.90999999999997 L514.5 303.97999999999996 L520.0 303.97999999999996 L525.6 317.96999999999997 L530.9 331.54999999999995 L535.5 331.54999999999995 L541.8 331.34 L546.7 329.48999999999995 L552.0 331.54999999999995 L557.2 330.31 L562.7 327.64 L567.9 328.66999999999996 L573.0 329.08 L578.8 331.34 L589.5 331.34 L594.6 329.48999999999995 L600.2 331.54999999999995 L605.5 331.34 L610.5 330.52 L616.2 328.04999999999995 L621.4 328.87 L626.5 328.87 L632.3 331.54999999999995 L643.0 331.54999999999995 L648.1 329.48999999999995 L653.7 306.03 L658.8 326.2 L664.0 329.48999999999995 L669.3 329.48999999999995 L674.9 331.54999999999995 L680.0 329.7 L685.2 330.31 L691.3 331.34 L706.8 331.14 L718.1 331.54999999999995 L723.2 329.08 L728.4 328.46 L731.9 328.87 L738.2 331.54999999999995 L743.9 331.54999999999995 L749.5 329.08 L754.6 331.54999999999995 L759.8 329.48999999999995 L764.9 330.31 L770.7 329.7 L776.2 331.54999999999995 L781.4 329.28 L786.5 328.87 L792.1 329.9 L797.4 328.46 L803.0 331.54999999999995 L808.1 331.54999999999995 L814.3 330.72999999999996 L818.8 329.48999999999995 L824.2 331.54999999999995 L840.0 331.34 L845.6 309.94 L850.7 323.10999999999996 L856.1 331.54999999999995 L866.8 331.54999999999995 L872.3 329.28 L877.7 331.34 L888.4 331.34 L893.5 329.08 L898.7 356.85999999999996" fill="none" stroke="#e46a0c" stroke-width="1.25" stroke-linejoin="round"/>
<path d="M157.0 333.39 L162.5 334.42 L167.7 335.65000000000003 L172.8 333.59000000000003 L178.0 333.59000000000003 L183.7 335.24 L188.9 332.77000000000004 L194.4 335.65000000000003 L199.6 333.8 L204.7 335.65000000000003 L226.3 335.65000000000003 L231.4 333.8 L236.6 335.45 L242.1 332.98 L247.9 335.65000000000003 L253.1 335.65000000000003 L258.2 333.8 L263.8 335.65000000000003 L268.9 335.65000000000003 L274.0 333.8 L279.8 335.24 L284.9 335.24 L290.5 334.62 L295.6 332.36 L300.8 332.36 L306.1 335.65000000000003 L337.4 335.65000000000003 L340.0 335.65000000000003 L344.1 335.24 L349.3 333.59000000000003 L359.5 332.77000000000004 L365.1 333.18 L370.9 335.65000000000003 L376.0 333.8 L381.2 335.24 L386.3 335.65000000000003 L391.4 332.77000000000004 L397.2 333.18 L412.0 333.59000000000003 L418.2 335.45 L423.3 332.77000000000004 L428.5 333.59000000000003 L434.7 334.42 L444.9 333.59000000000003 L450.1 335.65000000000003 L455.2 335.65000000000003 L465.5 334.42 L471.7 332.36 L476.8 334.83 L482.0 333.8 L487.7 335.65000000000003 L493.3 333.18 L498.4 332.77000000000004 L504.0 333.59000000000003 L509.3 333.8 L514.5 332.36 L525.6 332.36 L530.9 335.24 L535.5 335.24 L541.8 335.24 L546.7 333.39 L552.0 335.65000000000003 L557.2 334.62 L562.7 331.74 L567.9 332.98 L573.0 333.39 L578.8 335.65000000000003 L589.5 335.45 L594.6 333.8 L600.2 335.65000000000003 L605.5 335.45 L610.5 334.83 L616.2 332.36 L621.4 333.18 L626.5 333.18 L632.3 335.65000000000003 L643.0 335.65000000000003 L648.1 334.01 L653.7 332.77000000000004 L658.8 331.95 L664.0 333.8 L669.3 333.8 L674.9 335.65000000000003 L680.0 334.01 L685.2 334.62 L691.3 335.45 L706.8 335.24 L718.1 335.65000000000003 L723.2 333.59000000000003 L728.4 332.98 L731.9 333.18 L738.2 335.65000000000003 L743.9 335.65000000000003 L749.5 333.59000000000003 L754.6 335.65000000000003 L759.8 333.8 L764.9 334.62 L770.7 334.01 L776.2 335.65000000000003 L781.4 333.8 L786.5 333.39 L792.1 334.21000000000004 L797.4 332.77000000000004 L803.0 335.65000000000003 L808.1 335.65000000000003 L814.3 334.83 L818.8 333.59000000000003 L824.2 335.65000000000003 L840.0 335.65000000000003 L845.6 333.18 L850.7 332.77000000000004 L856.1 335.65000000000003 L866.8 335.65000000000003 L872.3 333.59000000000003 L877.7 335.65000000000003 L888.4 335.65000000000003 L893.5 333.18 L898.7 357.0067901234568" fill="none" stroke="#4d58c6" stroke-width="1.2" stroke-linejoin="round"/>
</svg>
<div class="yl" style="top:287.2px;letter-spacing:.03px">4 MB</div>
<div class="yl" style="top:320.7px;letter-spacing:.03px">2 MB</div>
<div class="yl" style="top:355.4px;letter-spacing:.3px">0 bytes</div>
<div class="t" style="left:964.5px;top:322.9px;font-size:5.7px;letter-spacing:.25px;color:#8c8c8c;transform:translate(-50%,-50%) rotate(90deg)">Sent</div>
<div class="xl" style="left:199.2px;top:363.3px">11:00 AM</div>
<div class="xl" style="left:263.3px;top:363.3px">12:00 PM</div>
<div class="xl" style="left:327.3px;top:363.3px">1:00 PM</div>
<div class="xl" style="left:391.4px;top:363.3px">2:00 PM</div>
<div class="xl" style="left:455.5px;top:363.3px">3:00 PM</div>
<div class="xl" style="left:519.5px;top:363.3px">4:00 PM</div>
<div class="xl" style="left:583.6px;top:363.3px">5:00 PM</div>
<div class="xl" style="left:647.7px;top:363.3px">6:00 PM</div>
<div class="xl" style="left:711.8px;top:363.3px">7:00 PM</div>
<div class="xl" style="left:775.8px;top:363.3px">8:00 PM</div>
<div class="xl" style="left:839.9px;top:363.3px">9:00 PM</div>
<div class="xl" style="left:904.0px;top:363.3px">10:00 PM</div>
<div class="dot" style="left:439.0px;top:374.7px;background:#434cc6;border:1.4px solid #2a31c0"></div>
<div class="lg" style="left:448.8px;top:375.7px">Control</div>
<div class="dot" style="left:515.3px;top:374.7px;background:#2ea192;border:1.4px solid #14907f"></div>
<div class="lg" style="left:525.1px;top:375.7px">Low</div>
<div class="dot" style="left:582.5px;top:374.7px;background:#a64dd0;border:1.4px solid #9432c2"></div>
<div class="lg" style="left:592.1px;top:375.7px">Normal</div>
<div class="dot" style="left:658.5px;top:374.7px;background:#ea7a22;border:1.4px solid #e2630a"></div>
<div class="lg" style="left:668.1px;top:375.7px">High</div>

  <div class="abs" style="left:144px;top:386.4px;width:828px;height:14px;background:#fafafa"></div>
  <div class="abs" style="left:144.3px;top:387.3px;width:17.7px;height:12.9px;background:#1a5fae"></div>
  <svg class="abs" style="left:144.3px;top:387.3px" width="17.7" height="12.9" viewBox="0 0 17.7 12.9"><path d="M4.6 7.1 L8.85 3.4 L13.1 7.1 M4.6 10.6 L8.85 6.9 L13.1 10.6" fill="none" stroke="#fff" stroke-width="1.15"/></svg>
  <div class="abs" style="left:144px;top:400.2px;width:828px;height:1px;background:#dadada"></div>
  <div class="abs" style="left:144px;top:401px;width:1px;height:116px;background:#dcdcdc"></div>
  <div class="abs" style="left:145px;top:401.2px;width:827px;height:15px;background:#fafafa"></div>
  <div class="abs" style="left:145px;top:469.5px;width:827px;height:48px;background:#fff"></div>
  <div class="cell" style="left:170.5px;top:405.2px;font-size:6.2px;color:#5a5a5a;letter-spacing:.06px">Priority</div>
<div class="cell" style="left:436.1px;top:405.2px;font-size:6.2px;color:#5a5a5a;letter-spacing:.06px">Bytes Received</div>
<div class="cell" style="left:715px;top:405.2px;font-size:6.2px;color:#5a5a5a;letter-spacing:.06px">Bytes Sent</div>
<div class="abs" style="left:163.6px;top:403.3px;width:1px;height:11.6px;background:#dedede"></div>
<div class="abs" style="left:429.1px;top:403.3px;width:1px;height:11.6px;background:#dedede"></div>
<div class="abs" style="left:708.1px;top:403.3px;width:1px;height:11.6px;background:#dedede"></div>
<svg class="abs" style="left:192px;top:405px" width="7" height="7" viewBox="0 0 7 7"><circle cx="3.4" cy="3.4" r="2.7" fill="none" stroke="#666" stroke-width=".6"/><rect x="3.1" y="2.9" width=".6" height="2.1" fill="#666"/><rect x="3.1" y="1.7" width=".6" height=".7" fill="#666"/></svg>
<div class="abs" style="left:145px;top:415.8px;width:827px;height:54.2px;background:#d8e3e9"></div>
<div class="abs" style="left:145px;top:415.8px;width:827px;height:1px;background:#c6d1d9"></div>
<div class="abs" style="left:145px;top:429.1px;width:827px;height:1px;background:#c6d1d9"></div>
<div class="abs" style="left:145px;top:442.4px;width:827px;height:1px;background:#c6d1d9"></div>
<div class="abs" style="left:145px;top:455.7px;width:827px;height:1px;background:#c6d1d9"></div>
<div class="abs" style="left:145px;top:469.0px;width:827px;height:1px;background:#c6d1d9"></div>
<div class="abs" style="left:163.2px;top:418.3px;width:1px;height:9.8px;background:#ccd7de"></div>
<div class="cb" style="left:150.9px;top:419.2px"></div>
<svg class="abs" style="left:150.9px;top:419.2px" width="8" height="8" viewBox="0 0 8 8"><path d="M1.9 4.2 L3.4 5.6 L6.2 2.5" fill="none" stroke="#fff" stroke-width="1.15"/></svg>
<div class="cell" style="left:170.5px;top:420.8px;font-size:6.8px;color:#6a6a6a">High</div>
<div class="cell" style="left:436.1px;top:420.8px;color:#6a6a6a">19.023 MB</div>
<div class="cell" style="left:715px;top:420.8px;color:#6a6a6a">44.034 MB</div>
<div class="abs" style="left:163.2px;top:431.6px;width:1px;height:9.8px;background:#ccd7de"></div>
<div class="cb" style="left:150.9px;top:432.5px"></div>
<svg class="abs" style="left:150.9px;top:432.5px" width="8" height="8" viewBox="0 0 8 8"><path d="M1.9 4.2 L3.4 5.6 L6.2 2.5" fill="none" stroke="#fff" stroke-width="1.15"/></svg>
<div class="cell" style="left:170.5px;top:434.1px;font-size:6.8px;color:#6a6a6a">Normal</div>
<div class="cell" style="left:436.1px;top:434.1px;color:#6a6a6a">13.383 MB</div>
<div class="cell" style="left:715px;top:434.1px;color:#6a6a6a">68.69 KB</div>
<div class="abs" style="left:163.2px;top:444.9px;width:1px;height:9.8px;background:#ccd7de"></div>
<div class="cb" style="left:150.9px;top:445.8px"></div>
<svg class="abs" style="left:150.9px;top:445.8px" width="8" height="8" viewBox="0 0 8 8"><path d="M1.9 4.2 L3.4 5.6 L6.2 2.5" fill="none" stroke="#fff" stroke-width="1.15"/></svg>
<div class="cell" style="left:170.5px;top:447.4px;font-size:6.8px;color:#6a6a6a">Low</div>
<div class="cell" style="left:436.1px;top:447.4px;color:#8a8a8a">0</div>
<div class="cell" style="left:715px;top:447.4px;color:#8a8a8a">0</div>
<div class="abs" style="left:163.2px;top:458.2px;width:1px;height:9.8px;background:#ccd7de"></div>
<div class="cb" style="left:150.9px;top:459.1px"></div>
<svg class="abs" style="left:150.9px;top:459.1px" width="8" height="8" viewBox="0 0 8 8"><path d="M1.9 4.2 L3.4 5.6 L6.2 2.5" fill="none" stroke="#fff" stroke-width="1.15"/></svg>
<div class="cell" style="left:170.5px;top:460.7px;font-size:6.8px;color:#6a6a6a">Control</div>
<div class="cell" style="left:436.1px;top:460.7px;color:#6a6a6a">192.922 MB</div>
<div class="cell" style="left:715px;top:460.7px;color:#6a6a6a">192.015 MB</div>
</div>
</body>
</html>
